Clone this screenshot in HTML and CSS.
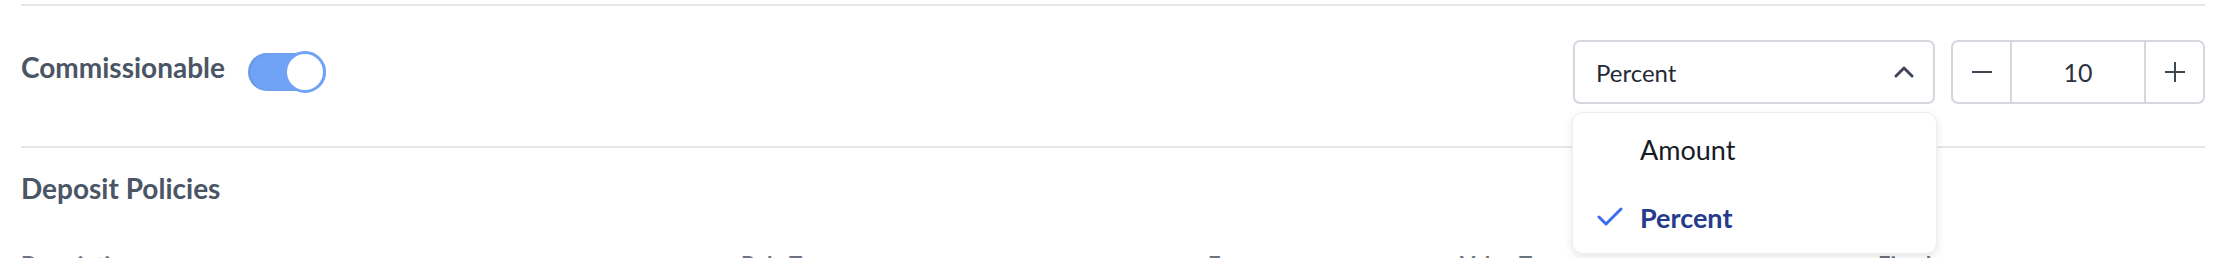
FILE: index.html
```html
<!DOCTYPE html>
<html lang="en">

<head>
  <meta charset="UTF-8" />
  <meta name="viewport" content="width=device-width, initial-scale=1.0" />
  <title>Commission settings</title>
  <link rel="stylesheet" href="styles.css">
</head>

<body>
  <div class="container">
    <div class="row commission-row">
      <div class="field-left">
        <span class="field-label">Commissionable</span>
        <span class="toggle on"><span class="knob"></span></span>
      </div>

      <div class="field-right">
        <div class="select-wrap">
          <div class="select">
            <span>Percent</span>
            <svg class="chevron" width="20" height="12" viewBox="0 0 20 12">
              <polyline points="2,10 10,2 18,10" fill="none" stroke="currentColor" stroke-width="3" stroke-linecap="round" stroke-linejoin="round" />
            </svg>
          </div>
          <!-- open dropdown -->
          <ul class="menu">
            <li class="menu-item">Amount</li>
            <li class="menu-item selected">
              <svg class="check" width="26" height="20" viewBox="0 0 26 20">
                <polyline points="2,10 9,17 24,2" fill="none" stroke="currentColor" stroke-width="3" stroke-linecap="round" stroke-linejoin="round" />
              </svg>
              Percent
            </li>
          </ul>
        </div>

        <div class="stepper">
          <button class="step-btn" type="button">
            <svg width="22" height="22" viewBox="0 0 22 22"><line x1="1" y1="11" x2="21" y2="11" stroke="currentColor" stroke-width="2" /></svg>
          </button>
          <div class="step-value">10</div>
          <button class="step-btn" type="button">
            <svg width="22" height="22" viewBox="0 0 22 22"><line x1="1" y1="11" x2="21" y2="11" stroke="currentColor" stroke-width="2" /><line x1="11" y1="1" x2="11" y2="21" stroke="currentColor" stroke-width="2" /></svg>
          </button>
        </div>
      </div>
    </div>

    <div class="section">
      <h2 class="section-title">Deposit Policies</h2>
      <div class="policy-head">
        <span>Description</span>
        <span>Rule Type</span>
        <span>Frequency</span>
        <span>Value Type</span>
        <span>Fixed</span>
      </div>
    </div>
  </div>
</body>

</html>
```

FILE: styles.css
```css
html,
body {
  height: 258px;
}

body {
  font-family: Lato, "Noto Sans", sans-serif;
  margin: 0;
  padding: 0;
  color: #4b5563;
  background: #fff;
  overflow: hidden;
}

.container {
  padding: 0 21px;
  height: 258px;
  overflow: hidden;
}

.row {
  display: flex;
  align-items: center;
  justify-content: space-between;
  border-top: 2px solid #e5e7eb;
  border-bottom: 2px solid #e5e7eb;
}

.commission-row {
  margin-top: 4px;
  padding: 34px 0 42px;
}

.field-left {
  display: flex;
  align-items: center;
  gap: 23px;
}

.field-label {
  font-size: 28px;
  font-weight: 700;
  color: #4a5565;
  padding-bottom: 10px;
}

.toggle {
  position: relative;
  display: inline-block;
  width: 78px;
  height: 38px;
  border-radius: 20px;
  background: #cbd5e1;
  box-shadow: inset 2px 0 2px rgba(0, 0, 0, 0.08);
}

.toggle.on {
  background: #70a2f6;
}

.toggle .knob {
  position: absolute;
  top: -2px;
  right: 0;
  width: 36px;
  height: 36px;
  border-radius: 50%;
  background: #fff;
  border: 3px solid #70a2f6;
}

.field-right {
  display: flex;
  align-items: center;
  gap: 16px;
}

.select-wrap {
  position: relative;
}

.select {
  box-sizing: border-box;
  width: 362px;
  height: 64px;
  border: 2px solid #d4d7de;
  border-radius: 7px;
  padding: 0 19px 0 21px;
  display: flex;
  align-items: center;
  justify-content: space-between;
  font-size: 24px;
  color: #1f2937;
}

.chevron {
  color: #3f4756;
}

.menu {
  position: absolute;
  top: 72px;
  left: -1px;
  right: -2px;
  margin: 0;
  padding: 2px 0;
  list-style: none;
  background: #fff;
  border: 1px solid #eceef2;
  border-radius: 11px;
  box-shadow: 0 3px 8px rgba(0, 0, 0, 0.1);
  z-index: 5;
}

.menu-item {
  display: flex;
  align-items: center;
  height: 68px;
  padding-left: 67px;
  font-size: 27px;
  color: #161b26;
}

.menu-item.selected {
  padding-left: 24px;
  gap: 17px;
  font-weight: 700;
  color: #253b8c;
}

.check {
  color: #3d6cf2;
}

.stepper {
  box-sizing: border-box;
  display: flex;
  width: 254px;
  height: 64px;
  border: 2px solid #d4d7de;
  border-radius: 7px;
}

.step-btn {
  width: 57px;
  border: 0;
  padding: 0;
  background: none;
  color: #3f4756;
  display: flex;
  align-items: center;
  justify-content: center;
}

.step-value {
  flex: 1;
  border-left: 2px solid #d4d7de;
  border-right: 2px solid #d4d7de;
  display: flex;
  align-items: center;
  justify-content: center;
  font-size: 25px;
  color: #2b3340;
}

.section-title {
  margin: 24px 0 0;
  font-size: 28px;
  font-weight: 700;
  color: #4a5565;
  line-height: 1.2;
}

.policy-head {
  display: grid;
  grid-template-columns: 720px 467px 252px 418px 1fr;
  margin-top: 45px;
  font-size: 22px;
  font-weight: 700;
  color: #6b7280;
}
```
